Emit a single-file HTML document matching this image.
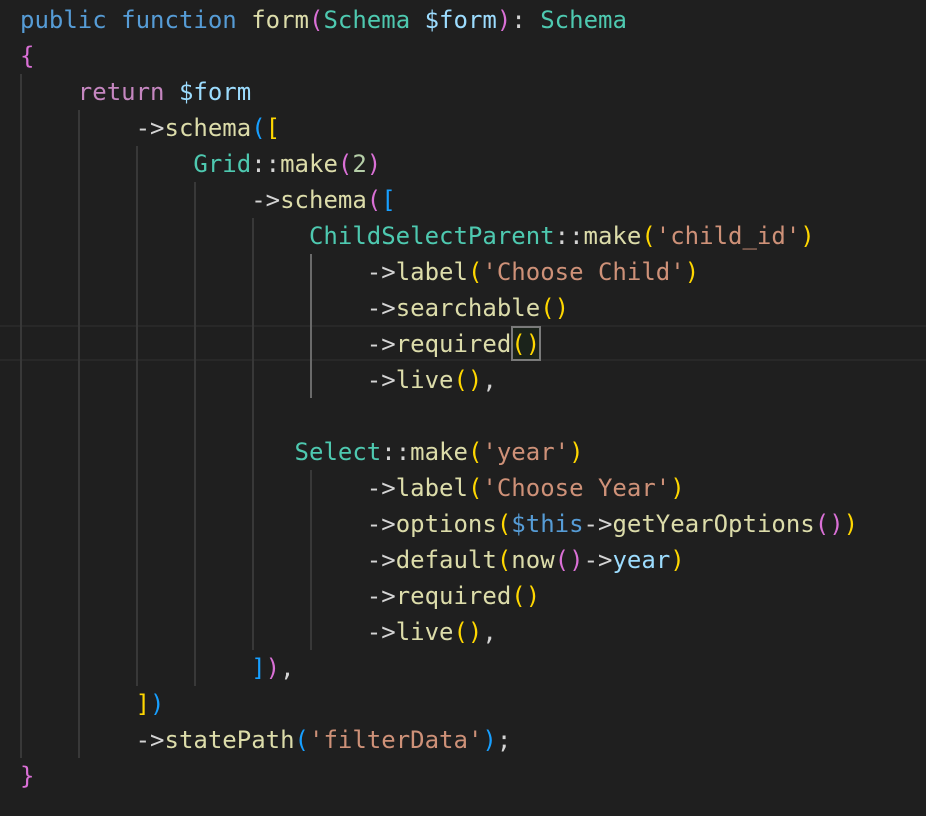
<!DOCTYPE html>
<html><head><meta charset="utf-8"><style>
html,body{margin:0;padding:0;background:#1f1f1f;width:926px;height:816px;overflow:hidden}
.code{position:absolute;left:20px;top:2px;font-family:"DejaVu Sans Mono","Liberation Mono",monospace;font-size:24px;line-height:36px;color:#d4d4d4;white-space:pre;z-index:2}
.g{position:absolute;width:2px;background:#383838;z-index:1}
.k{color:#569cd6}.f{color:#dcdcaa}.c{color:#4ec9b0}.v{color:#9cdcfe}.r{color:#c586c0}.s{color:#ce9178}.n{color:#b5cea8}
.y{color:#ffd700}.p{color:#da70d6}.b{color:#179fff}
.hl{position:absolute;left:0;top:325px;width:926px;height:36px;border-top:2px solid #282828;border-bottom:2px solid #282828;box-sizing:border-box}
.bm{position:absolute;left:511px;top:326px;width:30px;height:35px;border:2px solid #7a7a7a;box-sizing:border-box;background:#1b231b}
</style></head><body>
<div class="hl"></div>
<div class="bm"></div>
<div class="g" style="left:20px;top:74px;height:684px"></div>
<div class="g" style="left:78px;top:110px;height:648px"></div>
<div class="g" style="left:136px;top:146px;height:540px"></div>
<div class="g" style="left:194px;top:182px;height:504px"></div>
<div class="g" style="left:252px;top:218px;height:432px"></div>
<div class="g" style="left:310px;top:254px;height:144px;background:#6a6a6a"></div>
<div class="g" style="left:310px;top:470px;height:180px"></div>
<div class="code"><span class="k">public function</span> <span class="f">form</span><span class="p">(</span><span class="c">Schema</span> <span class="v">$form</span><span class="p">)</span>: <span class="c">Schema</span>
<span class="p">{</span>
    <span class="r">return</span> <span class="v">$form</span>
        -&gt;<span class="f">schema</span><span class="b">(</span><span class="y">[</span>
            <span class="c">Grid</span>::<span class="f">make</span><span class="p">(</span><span class="n">2</span><span class="p">)</span>
                -&gt;<span class="f">schema</span><span class="p">(</span><span class="b">[</span>
                    <span class="c">ChildSelectParent</span>::<span class="f">make</span><span class="y">(</span><span class="s">'child_id'</span><span class="y">)</span>
                        -&gt;<span class="f">label</span><span class="y">(</span><span class="s">'Choose Child'</span><span class="y">)</span>
                        -&gt;<span class="f">searchable</span><span class="y">()</span>
                        -&gt;<span class="f">required</span><span class="y">()</span>
                        -&gt;<span class="f">live</span><span class="y">()</span>,

                   <span class="c">Select</span>::<span class="f">make</span><span class="y">(</span><span class="s">'year'</span><span class="y">)</span>
                        -&gt;<span class="f">label</span><span class="y">(</span><span class="s">'Choose Year'</span><span class="y">)</span>
                        -&gt;<span class="f">options</span><span class="y">(</span><span class="k">$this</span>-&gt;<span class="f">getYearOptions</span><span class="p">()</span><span class="y">)</span>
                        -&gt;<span class="f">default</span><span class="y">(</span><span class="f">now</span><span class="p">()</span>-&gt;<span class="v">year</span><span class="y">)</span>
                        -&gt;<span class="f">required</span><span class="y">()</span>
                        -&gt;<span class="f">live</span><span class="y">()</span>,
                <span class="b">]</span><span class="p">)</span>,
        <span class="y">]</span><span class="b">)</span>
        -&gt;<span class="f">statePath</span><span class="b">(</span><span class="s">'filterData'</span><span class="b">)</span>;
<span class="p">}</span></div>
</body></html>
